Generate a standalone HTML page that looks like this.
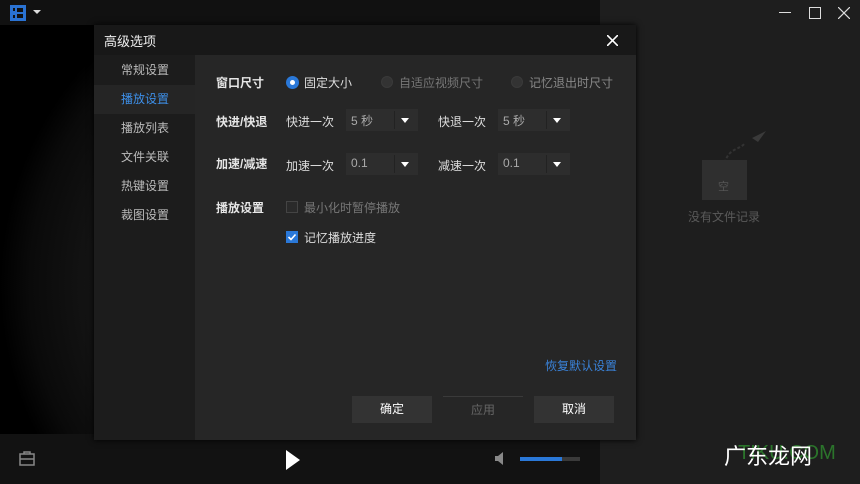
<!DOCTYPE html>
<html><head><meta charset="utf-8"><style>
*{margin:0;padding:0;box-sizing:border-box}
body{width:860px;height:484px;background:#000;font-family:"Liberation Sans","Noto Sans CJK SC",sans-serif;position:relative;overflow:hidden;font-size:12px;color:#ddd}
.a{position:absolute}
.dd{position:absolute;width:72px;height:22px;background:#2d2d2d}
.dd span{position:absolute;left:5px;top:3px;color:#aaa}
.dd i{position:absolute;left:48px;top:2px;width:1px;height:18px;background:#222}
.dd b{position:absolute;left:55px;top:9px;border-left:4px solid transparent;border-right:4px solid transparent;border-top:5px solid #fff}
.side div{position:absolute;left:0;width:101px;height:29px;padding-left:27px;line-height:29px;color:#bbb;font-size:12px}
.lbl{position:absolute;font-weight:bold;color:#e6e6e6;font-size:12px}
.t{position:absolute;color:#ddd;font-size:12px}
.btn{position:absolute;width:80px;height:27px;background:#333;color:#fff;text-align:center;line-height:27px}
</style></head><body>
<div class="a" style="left:0;top:0;width:600px;height:25px;background:#111"></div>
<div class="a" style="left:0;top:25px;width:600px;height:410px;background:radial-gradient(circle at 330px 260px,#1c1c1c 0,#151515 230px,#0a0a0a 300px,#000 330px)"></div>
<div class="a" style="left:600px;top:0;width:260px;height:484px;background:#1e1e1e"></div>
<div class="a" style="left:0;top:434px;width:600px;height:50px;background:#121212"></div>
<svg class="a" style="left:10px;top:5px" width="16" height="16"><rect x="0" y="0" width="16" height="16" fill="#2a72d2"/><rect x="3" y="3" width="2" height="3" fill="#111"/><rect x="3" y="10" width="2" height="3" fill="#111"/><rect x="7" y="3" width="6" height="4" fill="#111"/><rect x="7" y="9" width="6" height="4" fill="#111"/></svg>
<div class="a" style="left:33px;top:10px;border-left:4px solid transparent;border-right:4px solid transparent;border-top:4px solid #ddd"></div>
<div class="a" style="left:779px;top:12px;width:12px;height:1px;background:#ddd"></div>
<div class="a" style="left:809px;top:7px;width:12px;height:12px;border:1px solid #ddd"></div>
<svg class="a" style="left:838px;top:7px" width="12" height="12"><path d="M0 0L12 12M12 0L0 12" stroke="#ddd" stroke-width="1.2"/></svg>
<svg class="a" style="left:700px;top:128px" width="75" height="75"><path d="M25 35 C28 20 40 22 45 15" stroke="#333" stroke-width="2" stroke-dasharray="3 2" fill="none"/><path d="M52 10 L66 3 L58 14Z" fill="#3a3a3a"/><rect x="2" y="32" width="45" height="40" fill="#2f2f2f"/><text x="18" y="62" font-size="11" fill="#555" font-family="Noto Sans CJK SC">空</text></svg>
<div class="a" style="left:688px;top:208px;color:#5a5a5a;font-size:12px">没有文件记录</div>
<div class="a" style="left:94px;top:25px;width:542px;height:415px;background:#262626;box-shadow:0 0 6px #000"></div>
<div class="a" style="left:94px;top:25px;width:542px;height:30px;background:#181818"></div>
<div class="a" style="left:104px;top:31px;color:#eee;font-size:13px">高级选项</div>
<svg class="a" style="left:607px;top:35px" width="11" height="11"><path d="M0 0L11 11M11 0L0 11" stroke="#fff" stroke-width="1.6"/></svg>
<div class="a side" style="left:94px;top:55px;width:101px;height:385px;background:#1c1c1c">
<div style="top:1px">常规设置</div>
<div style="top:30px;background:#252525;color:#3d8fe8">播放设置</div>
<div style="top:59px">播放列表</div>
<div style="top:88px">文件关联</div>
<div style="top:117px">热键设置</div>
<div style="top:146px">裁图设置</div>
</div>
<div class="lbl" style="left:216px;top:74px">窗口尺寸</div>
<div class="a" style="left:286px;top:76px;width:13px;height:13px;border-radius:50%;background:#2a78d8"></div>
<div class="a" style="left:290px;top:80px;width:5px;height:5px;border-radius:50%;background:#fff"></div>
<div class="t" style="left:304px;top:74px">固定大小</div>
<div class="a" style="left:381px;top:76px;width:12px;height:12px;border-radius:50%;background:#333;border:1px solid #3a3a3a"></div>
<div class="t" style="left:399px;top:74px;color:#777">自适应视频尺寸</div>
<div class="a" style="left:511px;top:76px;width:12px;height:12px;border-radius:50%;background:#333;border:1px solid #3a3a3a"></div>
<div class="t" style="left:529px;top:74px;color:#888">记忆退出时尺寸</div>
<div class="lbl" style="left:216px;top:113px">快进/快退</div>
<div class="t" style="left:286px;top:113px">快进一次</div>
<div class="dd" style="left:346px;top:109px"><span>5 秒</span><i></i><b></b></div>
<div class="t" style="left:438px;top:113px">快退一次</div>
<div class="dd" style="left:498px;top:109px"><span>5 秒</span><i></i><b></b></div>
<div class="lbl" style="left:216px;top:155px">加速/减速</div>
<div class="t" style="left:286px;top:157px">加速一次</div>
<div class="dd" style="left:346px;top:153px"><span>0.1</span><i></i><b></b></div>
<div class="t" style="left:438px;top:157px">减速一次</div>
<div class="dd" style="left:498px;top:153px"><span>0.1</span><i></i><b></b></div>
<div class="lbl" style="left:216px;top:199px">播放设置</div>
<div class="a" style="left:286px;top:201px;width:12px;height:12px;border:1px solid #444;background:#2a2a2a"></div>
<div class="t" style="left:304px;top:199px;color:#777">最小化时暂停播放</div>
<div class="a" style="left:286px;top:231px;width:12px;height:12px;background:#2a78d8"></div>
<svg class="a" style="left:286px;top:231px" width="12" height="12"><path d="M2.5 6L5 8.5L9.5 3.5" stroke="#fff" stroke-width="1.6" fill="none"/></svg>
<div class="t" style="left:304px;top:229px">记忆播放进度</div>
<div class="a" style="left:545px;top:357px;color:#3a82d8;font-size:12px">恢复默认设置</div>
<div class="btn" style="left:352px;top:396px">确定</div>
<div class="btn" style="left:443px;top:396px;background:#262626;color:#666;border-top:1px solid #3a3a3a">应用</div>
<div class="btn" style="left:534px;top:396px">取消</div>
<svg class="a" style="left:19px;top:451px" width="17" height="15"><rect x="1" y="3" width="14" height="11" fill="none" stroke="#888" stroke-width="1.5"/><path d="M5 3V1H11V3M1 8H15" stroke="#888" stroke-width="1.5" fill="none"/></svg>
<svg class="a" style="left:285px;top:450px" width="16" height="20"><path d="M1 0L15 10L1 20Z" fill="#fff"/></svg>
<svg class="a" style="left:495px;top:452px" width="12" height="13"><path d="M0 4H3L8 0V13L3 9H0Z" fill="#888"/></svg>
<div class="a" style="left:520px;top:457px;width:60px;height:4px;background:#3a3a3a"></div>
<div class="a" style="left:520px;top:457px;width:42px;height:4px;background:#2a78d8"></div>
<div class="a" style="left:738px;top:442px;color:#2f8a2f;font-size:20px;opacity:.8">TIKU.COM</div>
<div class="a" style="left:724px;top:439px;color:#fff;font-size:22px">广东龙网</div>
</body></html>
